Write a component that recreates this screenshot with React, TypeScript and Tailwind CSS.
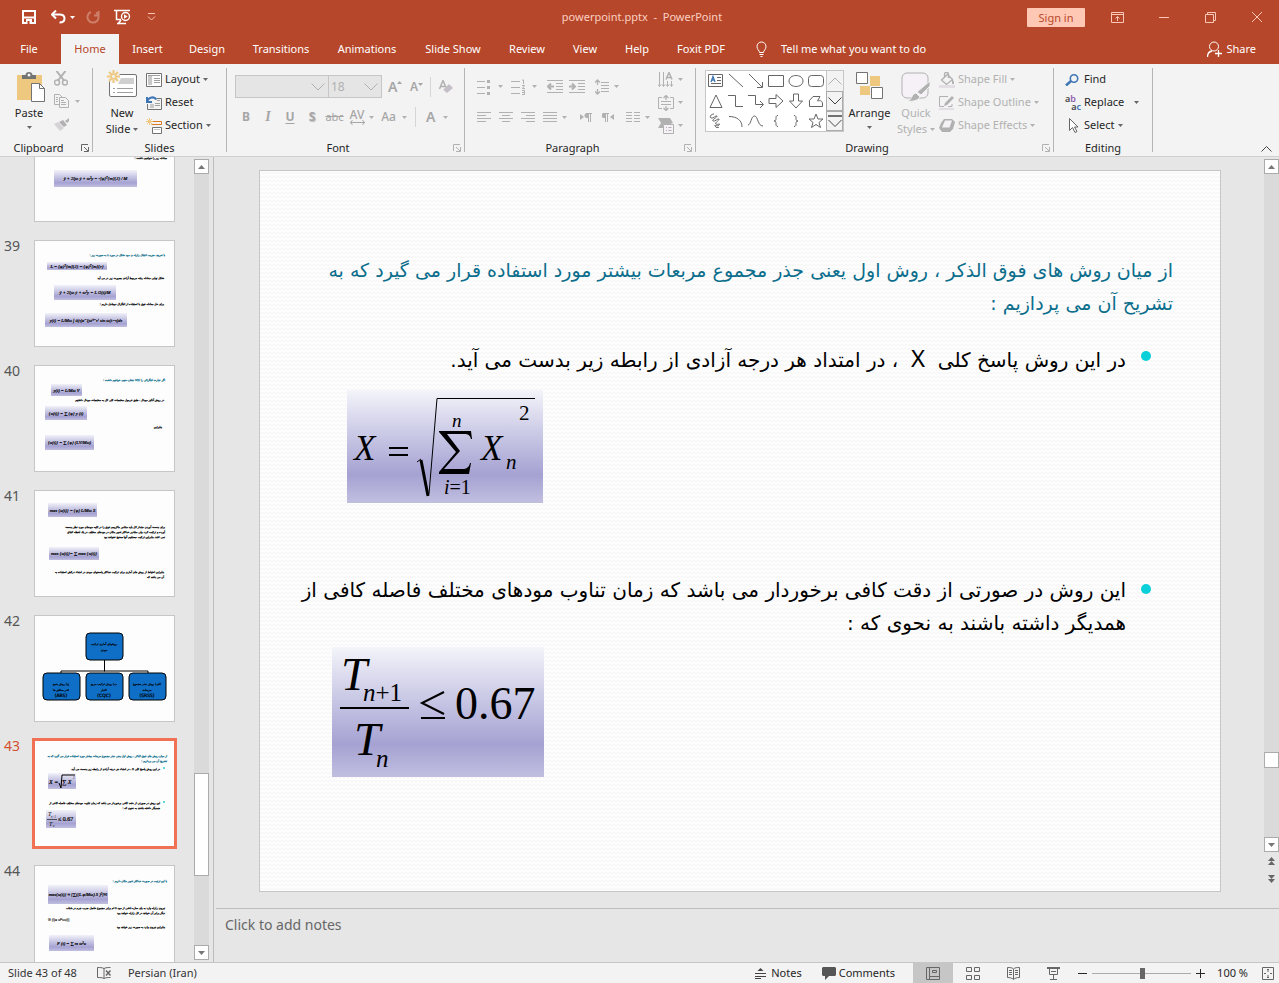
import React from "react";

type IconProps = {
  w: number;
  h: number;
  className?: string;
  children: React.ReactNode;
};

function Icon({ w, h, className = "", children }: IconProps) {
  return (
    <svg
      width={w}
      height={h}
      viewBox={`0 0 ${w} ${h}`}
      fill="none"
      stroke="currentColor"
      className={`shrink-0 ${className}`}
      aria-hidden="true"
    >
      {children}
    </svg>
  );
}

function Caret({ className = "text-[#666666]" }: { className?: string }) {
  return (
    <Icon w={5} h={3} className={className}>
      <path d="M0 0h5L2.500 3z" fill="currentColor" stroke="none" />
    </Icon>
  );
}

const muted = "text-[#b1b1b1]";

/* ---------- Title bar and tabs ---------- */

function TitleBar() {
  return (
    <header className="flex h-[34px] items-center text-white">
      <div className="flex flex-1 items-center pl-[22px]">
        <button aria-label="Save">
          <Icon w={14} h={14}>
            <path d="M1 1h12v12H1zM1 7.500h12" strokeWidth="2" />
            <path d="M4 9h6v5H4z" fill="currentColor" stroke="none" />
            <path d="M5.500 11h2v3h-2z" fill="#b7472a" stroke="none" />
          </Icon>
        </button>
        <button aria-label="Undo" className="ml-[15px] flex items-center gap-1">
          <Icon w={15} h={14}>
            <path d="M1 4.500h7.500c3 0 5 1.500 5 4s-2 4-5 4" strokeWidth="2" />
            <path d="M5 .5 1 4.500l4 4" strokeWidth="2" />
          </Icon>
          <Caret className="text-white" />
        </button>
        <button aria-label="Repeat" className="ml-[11px] text-[#cd7f6a]">
          <Icon w={14} h={14}>
            <path d="M5 2a5.500 5.500 0 1 0 5 .5M12.500 1v4.500H8" strokeWidth="2" />
          </Icon>
        </button>
        <button aria-label="Start From Beginning" className="ml-[14px]">
          <Icon w={17} h={16}>
            <path d="M0 1.500h16M2.500 2v8.500H7M4 15l3-4M3 14.500h9" strokeWidth="1.500" />
            <circle cx="11.500" cy="7.500" r="4" strokeWidth="1.400" />
            <path d="M10 5.300v4.400l3.700-2.200z" fill="currentColor" stroke="none" />
          </Icon>
        </button>
        <button aria-label="Customize Quick Access Toolbar" className="ml-4 text-[#f7c3b3]">
          <Icon w={9} h={8}>
            <path d="M1 .5h7M1 3.500 4.500 7 8 3.500" />
          </Icon>
        </button>
      </div>
      <h1 className="text-[11px] text-[#fbd0c3]">powerpoint.pptx&nbsp; -&nbsp; PowerPoint</h1>
      <div className="flex flex-1 items-center justify-end pr-[17px] text-[#fbc7b6]">
        <button className="h-[19px] w-[58px] rounded-[1px] bg-[#ffc8b5] text-[11px] leading-[17px] text-[#b7472a]">
          Sign in
        </button>
        <button aria-label="Ribbon Display Options" className="ml-[26px]">
          <Icon w={13} h={11}>
            <path d="M.5.5h12v10H.5zM.5 2.500h12M6.500 9V4.500M4.500 6.500l2-2 2 2" />
          </Icon>
        </button>
        <button aria-label="Minimize" className="ml-[35px]">
          <Icon w={10} h={10}>
            <path d="M0 5.500h10" />
          </Icon>
        </button>
        <button aria-label="Restore Down" className="ml-9">
          <Icon w={11} h={11}>
            <path d="M.5 2.500h8v8h-8zM2.500 2V.5h8v8H9" />
          </Icon>
        </button>
        <button aria-label="Close" className="ml-9">
          <Icon w={10} h={10}>
            <path d="m0 0 10 10M10 0 0 10" />
          </Icon>
        </button>
      </div>
    </header>
  );
}

const tabs = [
  { name: "File", width: "w-[60px]" },
  { name: "Home", width: "w-[58px]" },
  { name: "Insert", width: "w-[57px]" },
  { name: "Design", width: "w-[62px]" },
  { name: "Transitions", width: "w-[86px]" },
  { name: "Animations", width: "w-[86px]" },
  { name: "Slide Show", width: "w-[86px]" },
  { name: "Review", width: "w-[62px]" },
  { name: "View", width: "w-[54px]" },
  { name: "Help", width: "w-[50px]" },
  { name: "Foxit PDF", width: "w-[78px]" },
];

function TabStrip() {
  return (
    <nav className="flex h-[30px] items-stretch pl-px text-[11px] text-white">
      {tabs.map((tab) => (
        <button
          key={tab.name}
          className={`${tab.width} text-center ${
            tab.name === "Home" ? "bg-[#f3f3f3] text-[#b7472a]" : ""
          } ${tab.name === "File" ? "pr-1" : ""}`}
        >
          {tab.name}
        </button>
      ))}
      <button className="ml-4 flex items-center gap-[14px]">
        <Icon w={11} h={16}>
          <path d="M3.500 11.500c0-2-2.500-3-2.500-6a4.500 4.500 0 0 1 9 0c0 3-2.500 4-2.500 6zM3.500 13.500h4M4.500 15.500h2" />
        </Icon>
        Tell me what you want to do
      </button>
      <button className="ml-auto mr-[23px] flex items-center gap-1">
        <Icon w={15} h={17}>
          <circle cx="7" cy="5.500" r="4.500" />
          <path d="M.5 16c0-3.500 2-5.500 4.500-6M8 12.500h7M11.500 9v7" strokeWidth="1.300" />
        </Icon>
        Share
      </button>
    </nav>
  );
}

/* ---------- Ribbon ---------- */

type GroupProps = {
  title: string;
  className: string;
  launcher?: boolean;
  dim?: boolean;
  children: React.ReactNode;
};

function Group({ title, className, launcher, dim, children }: GroupProps) {
  return (
    <section className={`flex h-[84px] flex-col border-r border-[#b5b5b5] ${className}`}>
      <div className="flex h-[70px] shrink-0">{children}</div>
      <div className="flex h-5 shrink-0 items-center">
        <h2 className={`flex-1 text-center ${launcher ? "pr-1" : ""}`}>{title}</h2>
        {launcher && (
          <button aria-label={`${title} settings`} className={`mr-[3px] ${dim ? muted : "text-[#666666]"}`}>
            <Icon w={8} h={8}>
              <path d="M.5 7V.5H7M3 3l4 4M7.500 3v4.500H3" />
            </Icon>
          </button>
        )}
      </div>
    </section>
  );
}

function ClipboardGroup() {
  return (
    <Group title="Clipboard" className="w-[93px]" launcher>
      <button className="ml-[11px] flex w-9 flex-col items-center pt-1">
        <Icon w={28} h={30} className="ml-1">
          <path d="M0 3h25v25H0z" fill="#edc87e" stroke="none" />
          <path d="M5 7V3h3.500c0-4 7-4 7 0H19v4z" fill="#737373" stroke="none" />
          <circle cx="12" cy="3" r="1.500" fill="#f3f3f3" stroke="none" />
          <path d="M14.500 11.500h8l5 5v13h-13z" fill="#fff" stroke="#737373" />
          <path d="M22.500 11.500v5h5" stroke="#737373" />
        </Icon>
        <span className="mt-[3px] h-4 leading-4">Paste</span>
        <Caret className="mt-[5px] text-[#666666]" />
      </button>
      <div className={`ml-[7px] flex flex-col ${muted}`}>
        <button aria-label="Cut" className="h-[21px]">
          <Icon w={14} h={15}>
            <path d="M2.500 0 10 9.500M11.500 0 4 9.500" strokeWidth="2" />
            <circle cx="3" cy="11.500" r="2.500" strokeWidth="1.500" />
            <circle cx="11" cy="11.500" r="2.500" strokeWidth="1.500" />
          </Icon>
        </button>
        <button aria-label="Copy" className="flex h-6 items-center gap-[6px]">
          <Icon w={15} h={14}>
            <path d="M6 10.500H.5V.5h5L8 3M5.500 3.500h6l3 3v7h-9zM2 3.500h2M2 5.500h2M2 7.500h2M7 6.500h3M7 8.500h5M7 10.500h5" />
          </Icon>
          <Caret className="text-[#b1b1b1]" />
        </button>
        <button aria-label="Format Painter" className="h-[22px]">
          <Icon w={16} h={14}>
            <path d="m0 7 4-2 6 6-4 3z" fill="#d5d3d6" stroke="none" />
            <path d="m5 5 4-2 4 5-3 2zM11 4l4-3v3l-2 2z" fill="currentColor" stroke="none" />
          </Icon>
        </button>
      </div>
    </Group>
  );
}

function SlidesGroup() {
  return (
    <Group title="Slides" className="w-[134px]">
      <button className="ml-[11px] flex w-9 flex-col items-center pt-[2px]">
        <Icon w={30} h={28}>
          <rect x="2.500" y="4.500" width="27" height="22" rx="1.500" fill="#fff" stroke="#737373" />
          <path d="M14 8h13v6H11z" fill="#d0d0d0" stroke="none" />
          <path d="M6 18.500h2M10 18.500h16M6 22.500h2M10 22.500h16" stroke="#a0a0a0" />
          <circle cx="6.500" cy="6.500" r="6.500" fill="#f3f3f3" stroke="none" />
          <path d="M6.500 0v13M0 6.500h13M2 2l9 9M11 2l-9 9" stroke="#edc87e" strokeWidth="2" />
          <circle cx="6.500" cy="6.500" r="2" fill="#f3f3f3" stroke="#edc87e" />
        </Icon>
        <span className="mt-[7px] h-4 leading-4">New</span>
        <span className="flex h-4 items-center gap-[3px] leading-4">
          Slide <Caret />
        </span>
      </button>
      <div className="ml-[6px] flex flex-col">
        <button className="flex h-[23px] items-center gap-[3px]">
          <Icon w={16} h={14} className="text-[#737373]">
            <path d="M.5.5h15v13H.5z" fill="#fff" />
            <path d="M2 3h4v9H2z" fill="#c8c8c8" stroke="none" />
            <path d="M2 2.500h12M8 5.500h6M8 7.500h6M8 9.500h6" stroke="#a0a0a0" />
          </Icon>
          Layout <Caret />
        </button>
        <button className="flex h-[23px] items-center gap-[3px]">
          <Icon w={16} h={14} className="text-[#737373]">
            <path d="M1.500 8v5.500h14v-11H11" />
            <path d="M4 8h4v4H4z" fill="#c8c8c8" stroke="none" />
            <path d="M9 7.500h5M9 9.500h5M11 4.500h3" stroke="#a0a0a0" />
            <path d="M1 5.500C3 1 8 0 10.500 3.500M1 1v5h5" stroke="#3f76b5" strokeWidth="2" />
          </Icon>
          Reset
        </button>
        <button className="flex h-[23px] items-center gap-[3px]">
          <Icon w={16} h={16}>
            <path d="M3.500 0v7M0 3.500h7M1 1l5 5M6 1 1 6" stroke="#edc87e" />
            <path d="M7 3.500h8.500v3h-10" stroke="#e07a1f" />
            <path d="M6.500 9.500h9v6h-9z" fill="#fff" stroke="#737373" />
            <path d="M8 11h6v1H8z" fill="#c8c8c8" stroke="none" />
          </Icon>
          Section <Caret />
        </button>
      </div>
    </Group>
  );
}

function FontGroup() {
  const chevron = (
    <span className="pointer-events-none absolute right-1 top-2 text-[#b1b1b1]">
      <Icon w={14} h={8}>
        <path d="m.5.5 6.500 6.500 6.500-6.500" />
      </Icon>
    </span>
  );
  return (
    <Group title="Font" className="w-[238px]" launcher dim>
      <div className={`flex flex-col gap-[7px] pl-2 pt-[7px] ${muted}`}>
        <div className="flex h-[23px] items-center">
          <div className="relative w-[94px]">
            <select
              aria-label="Font"
              className="block h-[23px] w-full appearance-none border border-[#c6c6c6] bg-[#e5e5e5] pl-[2px]"
            >
              <option></option>
            </select>
            {chevron}
          </div>
          <div className="relative -ml-px w-[54px]">
            <select
              aria-label="Font Size"
              className="block h-[23px] w-full appearance-none border border-[#c6c6c6] bg-[#e5e5e5] pl-[2px] text-xs"
            >
              <option>18</option>
            </select>
            {chevron}
          </div>
          <button aria-label="Increase Font Size" className="ml-[6px] flex w-[22px] text-sm font-semibold text-[#a6a6a6]">
            A
            <Caret className="mt-1 rotate-180 text-[#a6a6a6]" />
          </button>
          <button aria-label="Decrease Font Size" className="flex w-[17px] text-xs font-semibold text-[#a6a6a6]">
            A
            <Caret className="mt-1 text-[#a6a6a6]" />
          </button>
          <span className="ml-[3px] h-5 w-px bg-[#d5d5d5]"></span>
          <button aria-label="Clear All Formatting" className="ml-2">
            <Icon w={15} h={14}>
              <path d="M.5 9 4 .5l3 7M2 6.500h4" strokeWidth="1.500" />
              <path d="m4 10 6-6 4 4-6 5z" fill="#c4bfc6" stroke="none" />
              <path d="m4 10 4 4" stroke="#f3f3f3" />
            </Icon>
          </button>
        </div>
        <div className="flex h-6 items-center text-xs font-bold text-[#a6a6a6]">
          <button className="w-[22px]">B</button>
          <button className="w-[22px] font-['Liberation_Serif',serif] text-sm italic">I</button>
          <button className="w-[22px] underline underline-offset-2">U</button>
          <button className="w-[22px] [text-shadow:1px_1px_1px_#bbb]">S</button>
          <button className="w-[23px] text-[11px] font-normal line-through">abc</button>
          <button aria-label="Character Spacing" className="flex w-[31px] items-center justify-center gap-1 font-medium">
            <span className="flex flex-col items-center leading-[11px]">
              AV
              <Icon w={15} h={5}>
                <path d="M0 2.500h15M2.500 0 .5 2.500l2 2.500M12.500 0l2 2.500-2 2.500" />
              </Icon>
            </span>
            <Caret className="text-[#b1b1b1]" />
          </button>
          <button className="flex w-[34px] items-center justify-center gap-[6px] font-medium">
            Aa <Caret className="text-[#b1b1b1]" />
          </button>
          <span className="ml-1 h-5 w-px bg-[#d5d5d5]"></span>
          <button className="ml-[10px] flex items-center gap-2 text-sm font-semibold">
            A <Caret className="text-[#b1b1b1]" />
          </button>
        </div>
      </div>
    </Group>
  );
}

function ParagraphGroup() {
  return (
    <Group title="Paragraph" className="w-[231px]" launcher dim>
      <div className={`flex w-[189px] flex-col gap-[7px] pl-3 pt-[7px] ${muted}`}>
        <div className="flex h-[23px] items-center">
          <button aria-label="Bullets" className="flex w-[34px] items-center gap-[7px]">
            <Icon w={14} h={16}>
              <path d="M0 2.500h8M0 8.500h8M0 14.500h8" />
              <path d="M10 1h3v3h-3zM10 7h3v3h-3zM10 13h3v3h-3z" fill="currentColor" stroke="none" />
            </Icon>
            <Caret className="text-[#b1b1b1]" />
          </button>
          <button aria-label="Numbering" className="flex w-9 items-center gap-[7px]">
            <Icon w={14} h={16}>
              <path d="M0 2.500h9M0 8.500h9M0 14.500h9M11 1h1.500v4M11 6.500h2.500l-2 3H14M11 11.500h2.500v4H11M11 13.500h2" />
            </Icon>
            <Caret className="text-[#b1b1b1]" />
          </button>
          <button aria-label="Decrease List Level" className="w-[22px]">
            <Icon w={16} h={13}>
              <path d="M0 .5h16M9 3.500h7M9 6.500h7M9 9.500h7M0 12.500h16" />
              <path d="M7 6.500H1M4 3.500l-3 3 3 3" strokeWidth="2" />
            </Icon>
          </button>
          <button aria-label="Increase List Level" className="w-[26px]">
            <Icon w={16} h={13}>
              <path d="M0 .5h16M9 3.500h7M9 6.500h7M9 9.500h7M0 12.500h16" />
              <path d="M0 6.500h6M3 3.500l3 3-3 3" strokeWidth="2" />
            </Icon>
          </button>
          <button aria-label="Line Spacing" className="flex items-center gap-[5px]">
            <Icon w={14} h={16}>
              <path d="M2.500 1v5M2.500 10v5M0 3.500 2.500 1 5 3.500M0 12.500 2.500 15 5 12.500" strokeWidth="1.300" />
              <path d="M6 3.500h8M6 6.500h8M6 9.500h8M6 12.500h8" />
            </Icon>
            <Caret className="text-[#b1b1b1]" />
          </button>
        </div>
        <div className="flex h-6 items-center">
          <button aria-label="Align Left" className="w-[22px]">
            <Icon w={14} h={10}>
              <path d="M0 .5h14M0 3.500h9M0 6.500h14M0 9.500h9" />
            </Icon>
          </button>
          <button aria-label="Center" className="w-[22px]">
            <Icon w={14} h={10}>
              <path d="M0 .5h14M3 3.500h8M0 6.500h14M3 9.500h8" />
            </Icon>
          </button>
          <button aria-label="Align Right" className="w-[22px]">
            <Icon w={14} h={10}>
              <path d="M0 .5h14M5 3.500h9M0 6.500h14M5 9.500h9" />
            </Icon>
          </button>
          <button aria-label="Justify" className="flex w-[37px] items-center gap-[5px]">
            <Icon w={14} h={10}>
              <path d="M0 .5h14M0 3.500h14M0 6.500h14M0 9.500h14" />
            </Icon>
            <Caret className="text-[#b1b1b1]" />
          </button>
          <button aria-label="Left-to-Right" className="w-[22px]">
            <Icon w={12} h={9}>
              <path d="M0 1v6l4-3z" fill="currentColor" stroke="none" />
              <path d="M7 5a2 2 0 0 1 0-5h2v5z" fill="currentColor" stroke="none" />
              <path d="M8.500 0v9M10.500 0v9M6 .5h6" />
            </Icon>
          </button>
          <button aria-label="Right-to-Left" className="w-6">
            <Icon w={12} h={9}>
              <path d="M12 1v6L8 4z" fill="currentColor" stroke="none" />
              <path d="M2 5a2 2 0 0 1 0-5h2v5z" fill="currentColor" stroke="none" />
              <path d="M3.500 0v9M5.500 0v9M1 .5h6" />
            </Icon>
          </button>
          <button aria-label="Columns" className="flex items-center gap-[5px]">
            <Icon w={14} h={10}>
              <path d="M0 .5h6M8 .5h6M0 3.500h6M8 3.500h6M0 6.500h6M8 6.500h6M0 9.500h6M8 9.500h6" />
            </Icon>
            <Caret className="text-[#b1b1b1]" />
          </button>
        </div>
      </div>
      <div className={`ml-1 flex flex-col ${muted}`}>
        <button aria-label="Text Direction" className="flex h-[23px] items-center gap-1">
          <Icon w={16} h={16}>
            <path d="M1.500 0v14M5.500 0v14M9.500 9v5M13.500 9v5M0 12.500l1.500 2 1.500-2M4 12.500l1.500 2 1.500-2M8 12.500l1.500 2 1.500-2M12 12.500l1.500 2 1.500-2" />
            <path d="m8 7.500 3-7 3 7M9 5.500h4" strokeWidth="1.500" />
          </Icon>
          <Caret className="text-[#b1b1b1]" />
        </button>
        <button aria-label="Align Text" className="flex h-[23px] items-center gap-1">
          <Icon w={16} h={16}>
            <path d="M4 2.500H.5v11H4M12 2.500h3.500v11H12M3 6.500h10M3 9.500h10" />
            <path d="M8 0v5M5.500 3 8 .5 10.500 3M8 11v5M5.500 13 8 15.500l2.500-2.500" strokeWidth="1.300" />
          </Icon>
          <Caret className="text-[#b1b1b1]" />
        </button>
        <button aria-label="Convert to SmartArt" className="flex h-[23px] items-center gap-1">
          <Icon w={16} h={16}>
            <path d="M0 0h12l3 5-3 1H5v4H0l3-5z" fill="currentColor" stroke="none" />
            <path d="M5.500 6.500h10v9h-10z" fill="#f6f1f7" />
            <path d="M8 9.500h1M10.500 9.500h3M8 12.500h1M10.500 12.500h3" />
          </Icon>
          <Caret className="text-[#b1b1b1]" />
        </button>
      </div>
    </Group>
  );
}

const shapes = [
  { name: "Text Box", d: "M.5 1.500h14v12H.5zM9 4.500h4M9 7.500h4M3 10.500h10" },
  { name: "Line", d: "m1 1 14 13" },
  { name: "Arrow", d: "m1 1 13 13M14.500 9v5.500H9" },
  { name: "Rectangle", d: "M.5 2.500h15v11H.5z" },
  { name: "Oval", d: "M8 2.500c4 0 7 2.300 7 5.500s-3 5.500-7 5.500-7-2.300-7-5.500 3-5.500 7-5.500z" },
  { name: "Rounded Rectangle", d: "M3.500 2.500h9a3 3 0 0 1 3 3v5a3 3 0 0 1-3 3h-9a3 3 0 0 1-3-3v-5a3 3 0 0 1 3-3z" },
  { name: "Triangle", d: "M8 2 2 14.500h12z" },
  { name: "Elbow Connector", d: "M0 2.500h7.500v11H15" },
  { name: "Elbow Arrow Connector", d: "M0 2.500h7.500v9H15M12 8l3.500 3.500L12 15" },
  { name: "Right Arrow", d: "M1 5.500h7V1.500l7 6.500-7 6.500v-4H1z" },
  { name: "Down Arrow", d: "M5.500 1v7h-4L8 15l6.500-7h-4V1z" },
  { name: "Freeform", d: "M1.500 13.500v-6L5 3.500h7L9.500 8c3-1 5 0 5 3v2.500z" },
  { name: "Scribble", d: "M6 1C3 1 1 4 3 5s5-3 6-2-6 4-4 5 5-3 6-2-5 4-3 5 5-1 3 1-5-1-4 1 3 2 4 1" },
  { name: "Arc", d: "M1 3.500c8 0 13 4 13 10.500" },
  { name: "Curve", d: "M0 12c3 0 3-9 6.500-9s3 10 8.500 10" },
  { name: "Left Brace", d: "M10 2.500c-4 0 0 5.500-4 5.500 4 0 0 5.500 4 5.500" },
  { name: "Right Brace", d: "M6 2.500c4 0 0 5.500 4 5.500-4 0 0 5.500-4 5.500" },
  { name: "Star", d: "m8 1 2 5h5l-4 3.500 1.500 5L8 11.500l-4.500 3 1.500-5L1 6h5z" },
];

function DrawingGroup() {
  return (
    <Group title="Drawing" className="w-[358px]" launcher dim>
      <div className="ml-[9px] mt-[2px] flex h-[62px] border border-[#c6c6c6] bg-white">
        <div className="grid w-[120px] grid-cols-6 grid-rows-3">
          {shapes.map((shape) => (
            <button key={shape.name} aria-label={shape.name} className="flex items-center justify-center text-[#666666]">
              <Icon w={16} h={16}>
                <path d={shape.d} />
                {shape.name === "Text Box" && <path d="m3 9 2-5.500L7 9M4 7h2" stroke="#3f76b5" strokeWidth="1.300" />}
              </Icon>
            </button>
          ))}
        </div>
        <div className="flex w-[17px] flex-col text-[#444444]">
          <button aria-label="Row Up" className="flex h-5 items-center justify-center border-l border-[#c6c6c6] bg-[#f3f3f3] text-[#b1b1b1]">
            <Icon w={14} h={8}>
              <path d="M.5 7.500 7 1l6.500 6.500" />
            </Icon>
          </button>
          <button aria-label="Row Down" className="flex h-5 items-center justify-center border border-[#ababab] bg-[#f3f3f3]">
            <Icon w={14} h={8}>
              <path d="M.5.5 7 7 13.500.5" />
            </Icon>
          </button>
          <button aria-label="More" className="flex h-5 items-center justify-center border border-[#ababab] bg-[#f3f3f3]">
            <Icon w={14} h={13}>
              <path d="M0 1h14" strokeWidth="1.500" />
              <path d="M.5 5 7 11.500 13.500 5" />
            </Icon>
          </button>
        </div>
      </div>
      <button className="ml-1 flex w-[43px] flex-col items-center pt-1">
        <Icon w={28} h={28}>
          <path d="M14 4h10v10H14zM4 14h10v9H4z" fill="#edc87e" stroke="none" />
          <path d="M.5.5h11v11H.5zM15.500 15.500h11v11h-11z" fill="#fff" stroke="#737373" />
        </Icon>
        <span className="mt-[5px] h-4 leading-4">Arrange</span>
        <Caret className="mt-[5px] text-[#666666]" />
      </button>
      <button className={`ml-1 flex w-[42px] flex-col items-center pt-1 ${muted}`}>
        <Icon w={30} h={30}>
          <rect x="1" y="1" width="26" height="25" rx="5" fill="#f6f1f7" />
          <path d="M29 9v5l-9 9-4-3z" fill="currentColor" stroke="#f3f3f3" />
          <path d="M6 29c5 0 4-7 9-8l4 4c-2 4-9 5-13 4z" fill="currentColor" stroke="#f3f3f3" />
        </Icon>
        <span className="mt-[3px] h-4 leading-4">Quick</span>
        <span className="flex h-4 items-center gap-[3px] leading-4">
          Styles <Caret className="text-[#b1b1b1]" />
        </span>
      </button>
      <div className={`ml-[2px] flex flex-col ${muted}`}>
        <button className="flex h-[23px] items-center gap-[3px]">
          <Icon w={16} h={16}>
            <path d="m2.500 8 6-5.500 5 5-6 5zM5.500 6V2.500c0-3 4-3 4 0V6" strokeWidth="1.300" />
            <path d="M13 7c2 2 2 3 2 5h-2z" fill="currentColor" stroke="none" />
            <path d="M0 13h16v3H0z" fill="#e2dee4" stroke="none" />
          </Icon>
          Shape Fill <Caret className="text-[#b1b1b1]" />
        </button>
        <button className="flex h-[23px] items-center gap-[3px]">
          <Icon w={16} h={15}>
            <path d="M9 1.500H.5v10H5M13 9v2.500H9" />
            <path d="m5 11 1-3 7-7 2 2-7 7z" fill="currentColor" stroke="none" />
            <path d="M0 14h15" stroke="#e2dee4" strokeWidth="2" />
          </Icon>
          Shape Outline <Caret className="text-[#b1b1b1]" />
        </button>
        <button className="flex h-[23px] items-center gap-[3px]">
          <Icon w={16} h={14}>
            <path d="M5 0h8l3 3-2 7-3 3H3L0 9l2-5z" fill="currentColor" stroke="none" />
            <path d="M6 1.500h7l-2.500 7H3z" fill="#f6f1f7" stroke="none" />
          </Icon>
          Shape Effects <Caret className="text-[#b1b1b1]" />
        </button>
      </div>
    </Group>
  );
}

function EditingGroup() {
  return (
    <Group title="Editing" className="w-[99px]">
      <div className="flex flex-1 flex-col pl-[11px]">
        <button className="flex h-[23px] items-center gap-[5px]">
          <Icon w={14} h={12} className="text-[#3f76b5]">
            <circle cx="9" cy="4.500" r="3.700" strokeWidth="1.600" />
            <path d="m6 7-5 4.500" strokeWidth="2.500" />
          </Icon>
          Find
        </button>
        <button className="flex h-[23px] items-center gap-[3px]">
          <span className="flex w-4 flex-col text-[9px] font-semibold leading-[8px]" aria-hidden="true">
            <span className="self-start text-[#444444]">
              a<span className="text-[#8e5fb0]">b</span>
            </span>
            <span className="self-end text-[#444444]">
              a<span className="text-[#3f76b5]">c</span>
            </span>
          </span>
          Replace <Caret className="ml-[7px] text-[#666666]" />
        </button>
        <button className="flex h-[23px] items-center gap-[3px]">
          <Icon w={16} h={15} className="text-[#666666]">
            <path d="M4.500.5v12l3-3 2.500 5 2-1-2.500-4.500h3.500z" fill="#fff" />
          </Icon>
          Select <Caret />
        </button>
      </div>
    </Group>
  );
}

function Ribbon() {
  return (
    <div className="flex h-[93px] shrink-0 items-start border-b border-[#d0d0d0] bg-[#f3f3f3] pt-1 text-[11px] text-[#262626]">
      <ClipboardGroup />
      <SlidesGroup />
      <FontGroup />
      <ParagraphGroup />
      <DrawingGroup />
      <EditingGroup />
      <button aria-label="Collapse the Ribbon" className="mb-1 ml-auto mr-[7px] self-end text-[#444444]">
        <Icon w={11} h={6}>
          <path d="m.5 5.500 5-5 5 5" />
        </Icon>
      </button>
    </div>
  );
}

/* ---------- Thumbnails ---------- */

type Line = { x: number; y: number; text: string; teal?: boolean; bullet?: boolean };
type Formula = { x: number; y: number; w: number; h: number; text: string };
type Thumb = { id: number; lines: Line[]; formulas: Formula[] };

const current = 43;

const thumbs: Thumb[] = [
  {
    id: 38,
    lines: [{ x: 132, y: 43, text: "معادله زیر را خواهیم داشت :" }],
    formulas: [{ x: 19, y: 54, w: 83, h: 17, text: "ÿ + 2ξω ẏ + ω²y = -[φ]ᵀ[m]{J} / M" }],
  },
  {
    id: 39,
    lines: [
      { x: 130, y: 15, text: "با تعریف ضریب انتقال زلزله ی مود شکل در مورد  L  به صورت زیر :", teal: true },
      { x: 129, y: 38, text: "شکل نهایی معادله رفته مربوط آزادی بصورت زیر در می آید" },
      { x: 129, y: 64, text: "برای حل معادله فوق با استفاده از انتگرال دوهامل داریم :" },
    ],
    formulas: [
      { x: 12, y: 21, w: 60, h: 8, text: "L = {φ}ᵀ[m]{J} = {φ}ᵀ[m]{r}" },
      { x: 19, y: 44, w: 62, h: 15, text: "ÿ + 2ξω ẏ + ω²y = L G(t)/M" },
      { x: 10, y: 72, w: 82, h: 14, text: "y(t) = L/Mω ∫ ü(τ)e⁻ξω⁽ᵗ⁻τ⁾ sin ω(t−τ)dτ" },
    ],
  },
  {
    id: 40,
    lines: [
      { x: 130, y: 15, text: "اگر عبارت انتگرالی را V(t) نشان دهیم، خواهیم داشت :", teal: true },
      { x: 129, y: 35, text: "در روش آنالیز مودال ، طبق فرمول مختصات کلی کل به مختصات مودال داشتیم" },
      { x: 127, y: 62, text: "بنابراین" },
    ],
    formulas: [
      { x: 16, y: 18, w: 31, h: 12, text: "y(t) = L/Mω V" },
      { x: 10, y: 40, w: 42, h: 14, text: "{u(t)} = ∑ {φ} y (t)" },
      { x: 10, y: 69, w: 49, h: 15, text: "{u(t)} = ∑ {φ} (LV/Mω)" },
    ],
  },
  {
    id: 41,
    lines: [
      { x: 130, y: 37, text: "برای بدست آوردن مقدار کل باید مقادیر ماکزیمم فوق را در کلیه مودهای مورد نظر بدست" },
      { x: 130, y: 42, text: "آورده و ترکیب کرد، ولی مقادیر حداکثر تغییر مکان در مودهای مختلف در یک لحظه اتفاق" },
      { x: 130, y: 47, text: "نمی افتد، بنابراین ترکیب مستقیم آنها صحیح نخواهد بود" },
      { x: 129, y: 82, text: "بنابراین احتیاط از روش های آماری برای ترکیب حداکثر پاسخهای مودی در امتداد درکش استفاده به" },
      { x: 129, y: 87, text: "آن می باشد که" },
    ],
    formulas: [
      { x: 13, y: 12, w: 49, h: 14, text: "max {u(t)} = {φ} L/Mω S" },
      { x: 14, y: 56, w: 50, h: 13, text: "max {u(t)}= ∑ max {u(t)}" },
    ],
  },
  { id: 42, lines: [], formulas: [] },
  {
    id: 43,
    lines: [
      { x: 132, y: 16, text: "از میان روش های فوق الذکر ، روش اول یعنی جذر مجموع مربعات بیشتر مورد استفاده قرار می گیرد که به", teal: true },
      { x: 132, y: 21, text: "تشریح آن می پردازیم :", teal: true },
      { x: 125, y: 29, text: "در این روش پاسخ کلی  X  ، در امتداد هر درجه آزادی از رابطه زیر بدست می آید.", bullet: true },
      { x: 125, y: 63, text: "این روش در صورتی از دقت کافی برخوردار می باشد که زمان تناوب مودهای مختلف فاصله کافی از", bullet: true },
      { x: 125, y: 68, text: "همدیگر داشته باشند به نحوی که :" },
    ],
    formulas: [],
  },
  {
    id: 44,
    lines: [
      { x: 132, y: 16, text: "با این ترتیب در صورت حداکثر تغییر مکان داریم :", teal: true },
      { x: 130, y: 43, text: "نیروی زلزله وارد به پای سازه ناشی از مود n ام برابر مجموع حاصل ضرب جرم در شتاب" },
      { x: 130, y: 48, text: "دیگر برابر آن خواهد در کل زلزله خواهد بود" },
      { x: 130, y: 62, text: "بنابراین نیروی وارد به صورت زیر خواهد بود" },
    ],
    formulas: [
      { x: 13, y: 19, w: 60, h: 19, text: "max{u(t)} ≈ [∑((L φ/Mω) S )²]½" },
      { x: 14, y: 69, w: 45, h: 16, text: "F (t) = ∑ m ω²u" },
    ],
  },
];

const orgBoxes = [
  { x: 51, y: 17, rows: ["روشهای آماری ترکیب", "مودی"] },
  { x: 8, y: 57, rows: ["ج) روش جمع", "قدر مطلق ها", "(ABS)"] },
  { x: 51, y: 57, rows: ["ب) روش ترکیب مربع", "کامل", "(CQC)"] },
  { x: 94, y: 57, rows: ["الف) روش جذر مجموع", "مربعات", "(SRSS)"] },
];

function SelectedFormulas() {
  return (
    <g fill="#000" fontFamily="Liberation Serif, serif" fontStyle="italic">
      <rect x="13" y="32" width="28" height="16" fill="url(#thumb-math)" />
      <text x="14" y="43" fontSize="6" stroke="#000" strokeWidth=".2">X =</text>
      <path d="m24 42 2 5 1-13h13" stroke="#000" fill="none" />
      <text x="27" y="43" fontSize="6" stroke="#000" strokeWidth=".2">∑ X</text>
      <text x="38" y="38" fontSize="3">2</text>
      <rect x="11" y="69" width="30" height="18" fill="url(#thumb-math)" />
      <text x="13" y="75" fontSize="6">T</text>
      <text x="16" y="77" fontSize="3">n+1</text>
      <path d="M12 78.500h10" stroke="#000" strokeWidth=".6" />
      <text x="14" y="85" fontSize="6">T</text>
      <text x="18" y="86" fontSize="3">n</text>
      <text x="23" y="80" fontSize="6" fontStyle="normal" stroke="#000" strokeWidth=".2">≤ 0.67</text>
    </g>
  );
}

function ThumbArt({ thumb }: { thumb: Thumb }) {
  return (
    <svg viewBox="0 0 139 105" className="block w-full" role="img" aria-label={`Slide ${thumb.id}`}>
      <rect width="139" height="105" fill="#fdfdfd" />
      {thumb.formulas.map((f) => (
        <g key={f.y}>
          <rect x={f.x} y={f.y} width={f.w} height={f.h} fill="url(#thumb-math)" />
          <text
            x={f.x + f.w / 2}
            y={f.y + f.h / 2 + 1.5}
            textAnchor="middle"
            fontSize="4.500"
            fontStyle="italic"
            fontFamily="Liberation Serif, DejaVu Serif, serif"
            stroke="#000"
            strokeWidth=".2"
          >
            {f.text}
          </text>
        </g>
      ))}
      {thumb.lines.map((l) => (
        <g key={l.y}>
          <text
            x={l.x}
            y={l.y}
            direction="rtl"
            fontSize="2.700"
            fontFamily="DejaVu Sans, sans-serif"
            fill={l.teal ? "#0b6e8c" : "#000"}
            stroke={l.teal ? "#0b6e8c" : "#000"}
            strokeWidth=".25"
          >
            {l.text}
          </text>
          {l.bullet && <rect x="128" y={l.y - 3} width="2" height="2" fill="#5fd9df" />}
        </g>
      ))}
      {thumb.id === 43 && <SelectedFormulas />}
      {thumb.id === 44 && (
        <text x="13" y="55" fontSize="3.500" fontFamily="Liberation Sans, sans-serif" stroke="#000" strokeWidth=".1">
          G (t)= uPuu(t)
        </text>
      )}
      {thumb.id === 42 && (
        <g stroke="#000">
          <path d="M69.500 44v11.500M26 57v-2h87v2" fill="none" />
          {orgBoxes.map((box) => (
            <g key={`${box.x}-${box.y}`}>
              <rect x={box.x} y={box.y} width="37" height="27" rx="4" fill="#0f6fc6" />
              {box.rows.map((row, i) => (
                <text
                  key={row}
                  x={box.x + 18}
                  y={box.y + 12 + i * 6}
                  strokeWidth=".2"
                  textAnchor="middle"
                  fontSize={row.startsWith("(") ? 4.5 : 2.9}
                  fontFamily="DejaVu Sans, sans-serif"
                >
                  {row}
                </text>
              ))}
            </g>
          ))}
        </g>
      )}
    </svg>
  );
}

function ScrollArrow({ label, up, className = "" }: { label: string; up?: boolean; className?: string }) {
  return (
    <button
      aria-label={label}
      className={`flex h-[15px] w-full shrink-0 items-center justify-center border border-[#ababab] bg-white text-[#777777] ${className}`}
    >
      <Icon w={7} h={4} className={up ? "rotate-180" : ""}>
        <path d="M0 0h7L3.500 4z" fill="currentColor" stroke="none" />
      </Icon>
    </button>
  );
}

function SlidePane() {
  return (
    <aside className="flex w-[214px] shrink-0 border-r border-[#bdbdbd]">
      <svg width="0" height="0" className="absolute" aria-hidden="true">
        <linearGradient id="thumb-math" x1="0" y1="0" x2="0" y2="1">
          <stop offset="0" stopColor="#f2f2f9" />
          <stop offset=".75" stopColor="#a5a2d2" />
          <stop offset="1" stopColor="#c1bfe0" />
        </linearGradient>
      </svg>
      <div className="min-w-0 flex-1 overflow-hidden">
        <ol className="-mt-[42px] flex flex-col gap-[18px]">
          {thumbs.map((thumb, i) => (
            <li key={thumb.id} className="flex items-start">
              {/* the first slide is scrolled half out of view, its number with it */}
              <span className={`w-[34px] pl-1 text-sm leading-[12px] ${thumb.id === current ? "text-[#d35230]" : "text-[#555555]"}`}>
                {i > 0 && thumb.id}
              </span>
              <button
                className={`w-[141px] border border-[#c6c6c6] ${
                  thumb.id === current ? "outline-[3px] -outline-offset-1 outline-[#f07153]" : ""
                }`}
              >
                <ThumbArt thumb={thumb} />
              </button>
            </li>
          ))}
        </ol>
      </div>
      <div className="my-[2px] mr-1 flex w-[15px] flex-col bg-[#dadada]">
        <ScrollArrow label="Scroll up" up />
        <div className="flex-[599]"></div>
        <div className="flex-[101] border border-[#ababab] bg-white"></div>
        <div className="flex-[69]"></div>
        <ScrollArrow label="Scroll down" />
      </div>
    </aside>
  );
}

/* ---------- Slide ---------- */

const mathBox = "block bg-linear-to-b from-[#f4f4fa] via-[#a5a2d2] via-75% to-[#c1bfe0]";

function RootSumFormula() {
  return (
    <svg width="196" height="113" className={mathBox} fontFamily="Liberation Serif, serif" fontStyle="italic">
      <text x="7" y="70" fontSize="35">X</text>
      <path d="M42 58h19M42 65h19" stroke="#000" strokeWidth="2" />
      <path d="m70 72 4-3" stroke="#000" fill="none" />
      <path d="m74 70 7 36" stroke="#000" strokeWidth="3" />
      <path d="m82 104 8-95.500h98" stroke="#000" fill="none" />
      <path d="M92 41h32l1 8h-1c-1-4-3-5-7-5h-17l13 17-16 18h18c5 0 7-2 8-6h1l-2 11H92v-2l17-20-17-20z" />
      <text x="105" y="37" fontSize="19">n</text>
      <text x="97" y="104" fontSize="20">
        i<tspan fontStyle="normal">=1</tspan>
      </text>
      <text x="134" y="70" fontSize="35">X</text>
      <text x="159" y="79" fontSize="21">n</text>
      <text x="172" y="30" fontSize="21" fontStyle="normal">2</text>
    </svg>
  );
}

function RatioFormula() {
  return (
    <svg width="212" height="130" className={mathBox} fontFamily="Liberation Serif, serif" fontStyle="italic">
      <text x="9" y="43" fontSize="47">T</text>
      <text x="31" y="54" fontSize="25">
        n<tspan fontStyle="normal">+1</tspan>
      </text>
      <path d="M8 61h69" stroke="#000" strokeWidth="2" />
      <text x="22" y="108" fontSize="47">T</text>
      <text x="44" y="120" fontSize="25">n</text>
      <path d="M112 45 90 56l22 11M89 71h24" stroke="#000" strokeWidth="2" fill="none" />
      <text x="123" y="72" fontSize="46" fontStyle="normal">0.67</text>
    </svg>
  );
}

function Slide() {
  return (
    <article className="relative aspect-[4/3] w-full overflow-hidden border border-[#c6c6c6] bg-[#fdfdfd]">
      <svg className="absolute inset-0 size-full" aria-hidden="true">
        <pattern id="waves" width="4" height="4" patternUnits="userSpaceOnUse">
          <path d="M0 3 2 1l2 2" fill="none" stroke="#f5f5f5" />
        </pattern>
        <rect width="100%" height="100%" fill="url(#waves)" />
      </svg>
      <div
        dir="rtl"
        lang="fa"
        className="relative flex flex-col whitespace-nowrap pt-[83px] pr-[47px] font-['DejaVu_Sans',sans-serif] text-[20px] leading-[33px] text-black"
      >
        <h2 className="text-[19px] text-[#0b6e8c]">
          از میان روش های فوق الذکر ، روش اول یعنی جذر مجموع مربعات بیشتر مورد استفاده قرار می گیرد که به
          <br />
          تشریح آن می پردازیم :
        </h2>
        <div className="mt-[21px] flex gap-[15px] pr-[22px]">
          <span className="mt-[10px] size-[10px] shrink-0 rounded-full bg-[#0bd0d9]"></span>
          <p>
            در این روش پاسخ کلی &nbsp;<span className="font-['Noto_Sans',sans-serif] text-[24px]">X</span>&nbsp; ، در
            امتداد هر درجه آزادی از رابطه زیر بدست می آید.
          </p>
        </div>
        <div dir="ltr" className="mt-[13px] pl-[87px]">
          <RootSumFormula />
        </div>
        <div className="mt-[71px] flex gap-[15px] pr-[22px]">
          <span className="mt-[10px] size-[10px] shrink-0 rounded-full bg-[#0bd0d9]"></span>
          <p>
            این روش در صورتی از دقت کافی برخوردار می باشد که زمان تناوب مودهای مختلف فاصله کافی از
            <br />
            همدیگر داشته باشند به نحوی که :
          </p>
        </div>
        <div dir="ltr" className="mt-[7px] pl-[72px]">
          <RatioFormula />
        </div>
      </div>
    </article>
  );
}

function Editor() {
  return (
    <main className="flex min-w-0 flex-1 flex-col">
      <div className="flex min-h-0 flex-1">
        <div className="min-w-0 flex-1 overflow-hidden pt-[13px] pr-[43px] pl-[45px]">
          <Slide />
        </div>
        <div className="mt-[2px] flex w-[15px] flex-col">
          <ScrollArrow label="Previous" up />
          <div className="flex-[578] bg-[#dadada]"></div>
          <div className="h-4 border border-[#ababab] bg-white"></div>
          <div className="flex-[69] bg-[#dadada]"></div>
          <ScrollArrow label="Next" />
          <button aria-label="Previous Slide" className="flex h-[18px] items-center justify-center text-[#666666]">
            <Icon w={7} h={8}>
              <path d="M0 4h7L3.500 0zM0 8h7L3.500 4z" fill="currentColor" stroke="none" />
            </Icon>
          </button>
          <button aria-label="Next Slide" className="mb-5 flex h-[18px] items-center justify-center text-[#666666]">
            <Icon w={7} h={8}>
              <path d="M0 0h7L3.500 4zM0 4h7L3.500 8z" fill="currentColor" stroke="none" />
            </Icon>
          </button>
        </div>
      </div>
      <textarea
        aria-label="Notes"
        placeholder="Click to add notes"
        className="ml-[2px] block h-[54px] resize-none border-t border-[#bdbdbd] px-[9px] py-[6px] text-sm text-[#555555] outline-none placeholder:text-[#666666]"
      />
    </main>
  );
}

/* ---------- Status bar ---------- */

function StatusBar() {
  return (
    <footer className="flex h-[21px] shrink-0 items-center border-t border-[#c6c6c6] bg-[#f3f3f3] pl-2 text-[11px] leading-[18px] text-[#333333]">
      <span>Slide 43 of 48</span>
      <button aria-label="Spelling" className="ml-5 text-[#666666]">
        <Icon w={15} h={12}>
          <path d="M7 1.500C5 .5 3 .5.500.500v10c2.500 0 4.500 0 6.500 1zM7 1.500C9 .5 11 .5 13.500.5M7 11.500c2-1 4-1 6.500-1" />
          <path d="m9 3.500 4.500 5M13.500 3.500l-4.500 5" strokeWidth="1.500" />
        </Icon>
      </button>
      <button className="ml-4">Persian (Iran)</button>
      <div className="ml-auto flex items-center self-stretch text-[#262626]">
        <button className="flex items-center gap-[5px]">
          <Icon w={11} h={11} className="text-[#444444]">
            <path d="M0 5.500h11M0 8.500h11M0 10.500h6" />
            <path d="M2.500 3h6L5.500 0z" fill="currentColor" stroke="none" />
          </Icon>
          Notes
        </button>
        <button className="ml-5 flex items-center gap-[3px]">
          <Icon w={14} h={13} className="text-[#555555]">
            <path d="M1 0h12l1 1v7l-1 1H7l-4 4V9H1L0 8V1z" fill="currentColor" stroke="none" />
          </Icon>
          Comments
        </button>
        <div className="ml-[18px] flex self-stretch text-[#666666]">
          <button aria-label="Normal" className="flex w-10 items-center justify-center bg-[#c6c6c6]">
            <Icon w={14} h={13}>
              <path d="M.5.5h13v12H.5zM3.500.5v12M3.500 9.500h10M6.500 3.500h4v2h-4z" />
            </Icon>
          </button>
          <button aria-label="Slide Sorter" className="flex w-10 items-center justify-center">
            <Icon w={14} h={13}>
              <path d="M.5.5h5v4h-5zM8.500.5h5v4h-5zM.5 8.500h5v4h-5zM8.500 8.500h5v4h-5z" />
            </Icon>
          </button>
          <button aria-label="Reading View" className="flex w-10 items-center justify-center">
            <Icon w={13} h={13}>
              <path d="M.5.500C3 .5 5 .5 6.500 2c1.500-1.500 3.500-1.500 6-1.500v10c-2.500 0-4.500.5-6 2-1.500-1.500-3.500-2-6-2zM6.500 2v10M2 3.500h3M2 5.500h3M2 7.500h3M8 3.500h3M8 5.500h3M8 7.500h3" />
            </Icon>
          </button>
          <button aria-label="Slide Show" className="flex w-10 items-center justify-center">
            <Icon w={13} h={13}>
              <path d="M0 1h13" strokeWidth="2" />
              <path d="M2.500 2v5.500h8V2M4 4.500h5M6.500 8v4M3 12.500h7" />
            </Icon>
          </button>
        </div>
        <button aria-label="Zoom Out" className="ml-[5px]">
          <Icon w={9} h={9}>
            <path d="M0 4.500h9" />
          </Icon>
        </button>
        <input
          type="range"
          aria-label="Zoom"
          min={0}
          max={100}
          defaultValue={51}
          className="mx-[5px] h-3 w-[99px] appearance-none bg-transparent [&::-webkit-slider-runnable-track]:h-px [&::-webkit-slider-runnable-track]:bg-[#ababab] [&::-webkit-slider-thumb]:-mt-[5px] [&::-webkit-slider-thumb]:h-[11px] [&::-webkit-slider-thumb]:w-[5px] [&::-webkit-slider-thumb]:appearance-none [&::-webkit-slider-thumb]:bg-[#666666]"
        />
        <button aria-label="Zoom In">
          <Icon w={9} h={9}>
            <path d="M0 4.500h9M4.500 0v9" />
          </Icon>
        </button>
        <button className="ml-3">100 %</button>
        <button aria-label="Fit slide to current window" className="mr-[5px] ml-[14px] text-[#666666]">
          <Icon w={12} h={13}>
            <path d="M.5.5h11v12H.5z" />
            <path d="M6 2v3M6 8v3M2 6.500h2M8 6.500h2M5 3l1-1 1 1M5 10l1 1 1-1" />
          </Icon>
        </button>
      </div>
    </footer>
  );
}

export default function App() {
  return (
    <div className="flex h-screen flex-col overflow-hidden bg-[#e6e6e6] font-['Noto_Sans',sans-serif]">
      <div className="shrink-0 bg-[#b7472a]">
        <TitleBar />
        <TabStrip />
      </div>
      <Ribbon />
      <div className="flex min-h-0 flex-1">
        <SlidePane />
        <Editor />
      </div>
      <StatusBar />
    </div>
  );
}
